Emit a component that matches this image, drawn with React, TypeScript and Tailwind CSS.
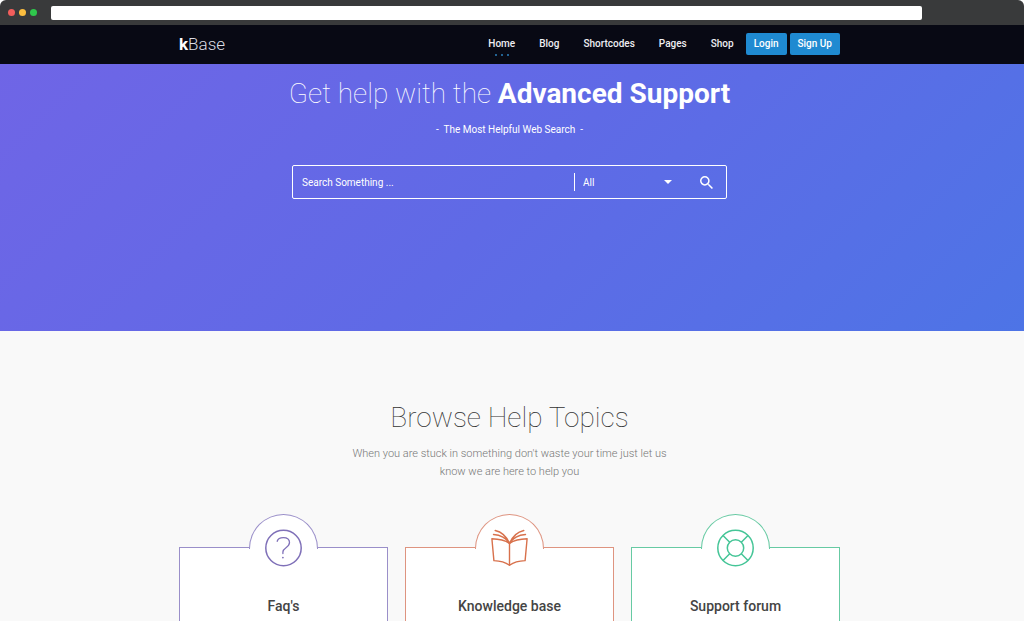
import type { ReactNode } from "react";

const links = ["Home", "Blog", "Shortcodes", "Pages", "Shop"];

function QuestionIcon() {
  return (
    <svg viewBox="0 0 38 38" className="size-[38px]" fill="none" stroke="currentColor" strokeLinecap="round" aria-hidden="true">
      <circle cx="18.500" cy="19" r="17.700" strokeWidth="1.500" />
      <path d="M12.200 12.300C12.900 9.800 15.100 8.600 18.300 8.600c3.700 0 6.200 2 6.200 5 0 2.500-1.500 3.800-3.500 5.100-2 1.300-3.100 2.300-3.100 4.400v1.500" strokeWidth="1.300" />
      <circle cx="17.900" cy="28.600" r="0.900" fill="currentColor" stroke="none" />
    </svg>
  );
}

function BookIcon() {
  return (
    <svg viewBox="0 0 38 38" className="size-[38px]" fill="none" stroke="currentColor" strokeWidth="1.400" strokeLinecap="round" strokeLinejoin="round" aria-hidden="true">
      <path d="M18.500 14.300C13.500 11.100 6.500 10 .9 9.800l2 21.800c6 .2 11.400 1.600 15.600 4.600 4.200-3 9.600-4.400 15.600-4.600l2-21.800C30.500 10 23.500 11.100 18.500 14.300Z" />
      <path d="M18.500 14.300v21.900" />
      <path d="M18.500 14.300C15 8.800 9.500 6 2.500 5.500M18.500 14.300C15.500 7.500 11 3 4.200 1.500M18.500 14.300C22 8.800 27.500 6 34.500 5.500M18.500 14.300C21.500 7.500 26 3 32.800 1.500" />
    </svg>
  );
}

function LifebuoyIcon() {
  return (
    <svg viewBox="0 0 38 38" className="size-[38px]" fill="none" stroke="currentColor" strokeWidth="1.500" aria-hidden="true">
      <circle cx="18.500" cy="19" r="17.700" />
      <circle cx="18.500" cy="19" r="8.200" />
      <path d="m6 6.500 6.700 6.700M31 6.500l-6.700 6.700M6 31.500l6.700-6.700M31 31.500l-6.700-6.700" />
    </svg>
  );
}

const topics: { title: string; border: string; color: string; icon: ReactNode }[] = [
  { title: "Faq's", border: "border-[#9a8fc9]", color: "text-[#7f70b8]", icon: <QuestionIcon /> },
  { title: "Knowledge base", border: "border-[#de9480]", color: "text-[#d8714c]", icon: <BookIcon /> },
  { title: "Support forum", border: "border-[#67caa3]", color: "text-[#45c597]", icon: <LifebuoyIcon /> },
];

function WindowBar() {
  return (
    <div className="flex h-[25px] items-center bg-[#393a3b] pl-2 pr-[102px]">
      <div className="flex gap-1">
        <span className="size-[7px] rounded-full bg-[#f25e5c]" />
        <span className="size-[7px] rounded-full bg-[#fbbd3f]" />
        <span className="size-[7px] rounded-full bg-[#2fc74c]" />
      </div>
      <input aria-label="Address" className="ml-[14px] h-[14px] min-w-0 flex-1 rounded-xs bg-white px-2 text-[10px] outline-none" />
    </div>
  );
}

function Header() {
  return (
    <header className="bg-[#080914] pr-[5px] text-white">
      <div className="mx-auto flex h-[39px] max-w-[661px] items-center justify-between pb-[2px]">
        <a href="#" className="text-[17px] leading-5 font-light text-[#dcdce4]">
          <b className="font-bold text-white">k</b>Base
        </a>
        <div className="flex items-center">
          <nav className="flex gap-6 text-[10px] leading-4 font-medium text-[#eeeef2]">
            {links.map((link, i) => (
              <a key={link} href="#" className="relative">
                {link}
                {i === 0 && (
                  <span className="absolute -bottom-1 left-1/2 flex -translate-x-1/2 gap-1">
                    <i className="size-0.5 rounded-full bg-[#2b80bd]" />
                    <i className="size-0.5 rounded-full bg-[#2b80bd]" />
                    <i className="size-0.5 rounded-full bg-[#2b80bd]" />
                  </span>
                )}
              </a>
            ))}
          </nav>
          <button type="button" className="ml-3 h-[22px] rounded-xs bg-[#1f8ad1] px-2 text-[10px] font-medium">Login</button>
          <button type="button" className="ml-[3px] h-[22px] rounded-xs bg-[#1f8ad1] px-2 text-[10px] font-medium">Sign Up</button>
        </div>
      </div>
    </header>
  );
}

function Hero() {
  return (
    <section className="h-[267px] bg-linear-135 from-[#6f65e6] via-[#5f6ae6] to-[#4d74e6] pr-[5px] pt-[12px] text-center text-white">
      <h1 className="text-[28px] leading-9 font-thin">
        Get help with the <b className="font-bold">Advanced Support</b>
      </h1>
      <p className="mt-[10px] text-[10px] leading-4">-&nbsp; The Most Helpful Web Search &nbsp;-</p>
      <form className="mx-auto mt-[27px] flex h-[34px] max-w-[435px] items-center rounded-xs border border-white">
        <input aria-label="Search Something" placeholder="Search Something ..." className="h-full min-w-0 flex-1 bg-transparent pl-[9px] text-[10px] placeholder:text-white outline-none" />
        <div className="relative flex h-[18px] w-[112px] items-center border-l border-white">
          <select aria-label="Category" className="h-full w-full appearance-none bg-transparent pl-2 text-[10px] outline-none">
            <option>All</option>
          </select>
          <svg viewBox="0 0 8 4" className="pointer-events-none absolute right-[14px] h-1 w-2" fill="currentColor" aria-hidden="true">
            <path d="M0 0h8L4 4Z" />
          </svg>
        </div>
        <button type="submit" aria-label="Search" className="mx-3 flex size-[16px] items-center justify-center">
          <svg viewBox="3 3 17.500 17.500" className="size-[13px]" fill="currentColor" aria-hidden="true">
            <path d="M15.500 14h-.79l-.28-.27A6.471 6.471 0 0 0 16 9.500 6.500 6.500 0 1 0 9.500 16c1.610 0 3.090-.59 4.230-1.570l.27.28v.79l5 4.990L20.490 19l-4.990-5zm-6 0C7.010 14 5 11.990 5 9.500S7.010 5 9.500 5 14 7.010 14 9.500 11.990 14 9.500 14z" />
          </svg>
        </button>
      </form>
    </section>
  );
}

function Topics() {
  return (
    <section className="flex flex-1 flex-col bg-[#f9f9f9] pr-[5px] pt-[69px] text-center">
      <h2 className="text-[28px] leading-9 font-thin text-[#333]">Browse Help Topics</h2>
      <p className="mx-auto mt-[9px] max-w-[340px] text-[11px] leading-[18px] font-light text-[#777]">
        When you are stuck in something don't waste your time just let us know we are here to help you
      </p>
      <div className="mx-auto mt-[66px] grid w-full max-w-[661px] flex-1 grid-cols-3 gap-[17px]">
        {topics.map((t) => (
          <article key={t.title} className={`border border-b-0 bg-white ${t.border}`}>
            <div className={`mx-auto -mt-[34px] h-[35px] w-[69px] rounded-t-full border border-b-0 bg-white ${t.border}`}>
              <div className={`flex justify-center pt-[14px] ${t.color}`}>{t.icon}</div>
            </div>
            <h3 className="mt-[47px] pb-[6px] text-[14px] leading-5 font-medium text-[#444]">{t.title}</h3>
          </article>
        ))}
      </div>
    </section>
  );
}

export default function App() {
  return (
    <div className="flex min-h-screen flex-col overflow-hidden rounded-t-md font-['Roboto',sans-serif] antialiased">
      <WindowBar />
      <Header />
      <main className="flex flex-1 flex-col">
        <Hero />
        <Topics />
      </main>
    </div>
  );
}
